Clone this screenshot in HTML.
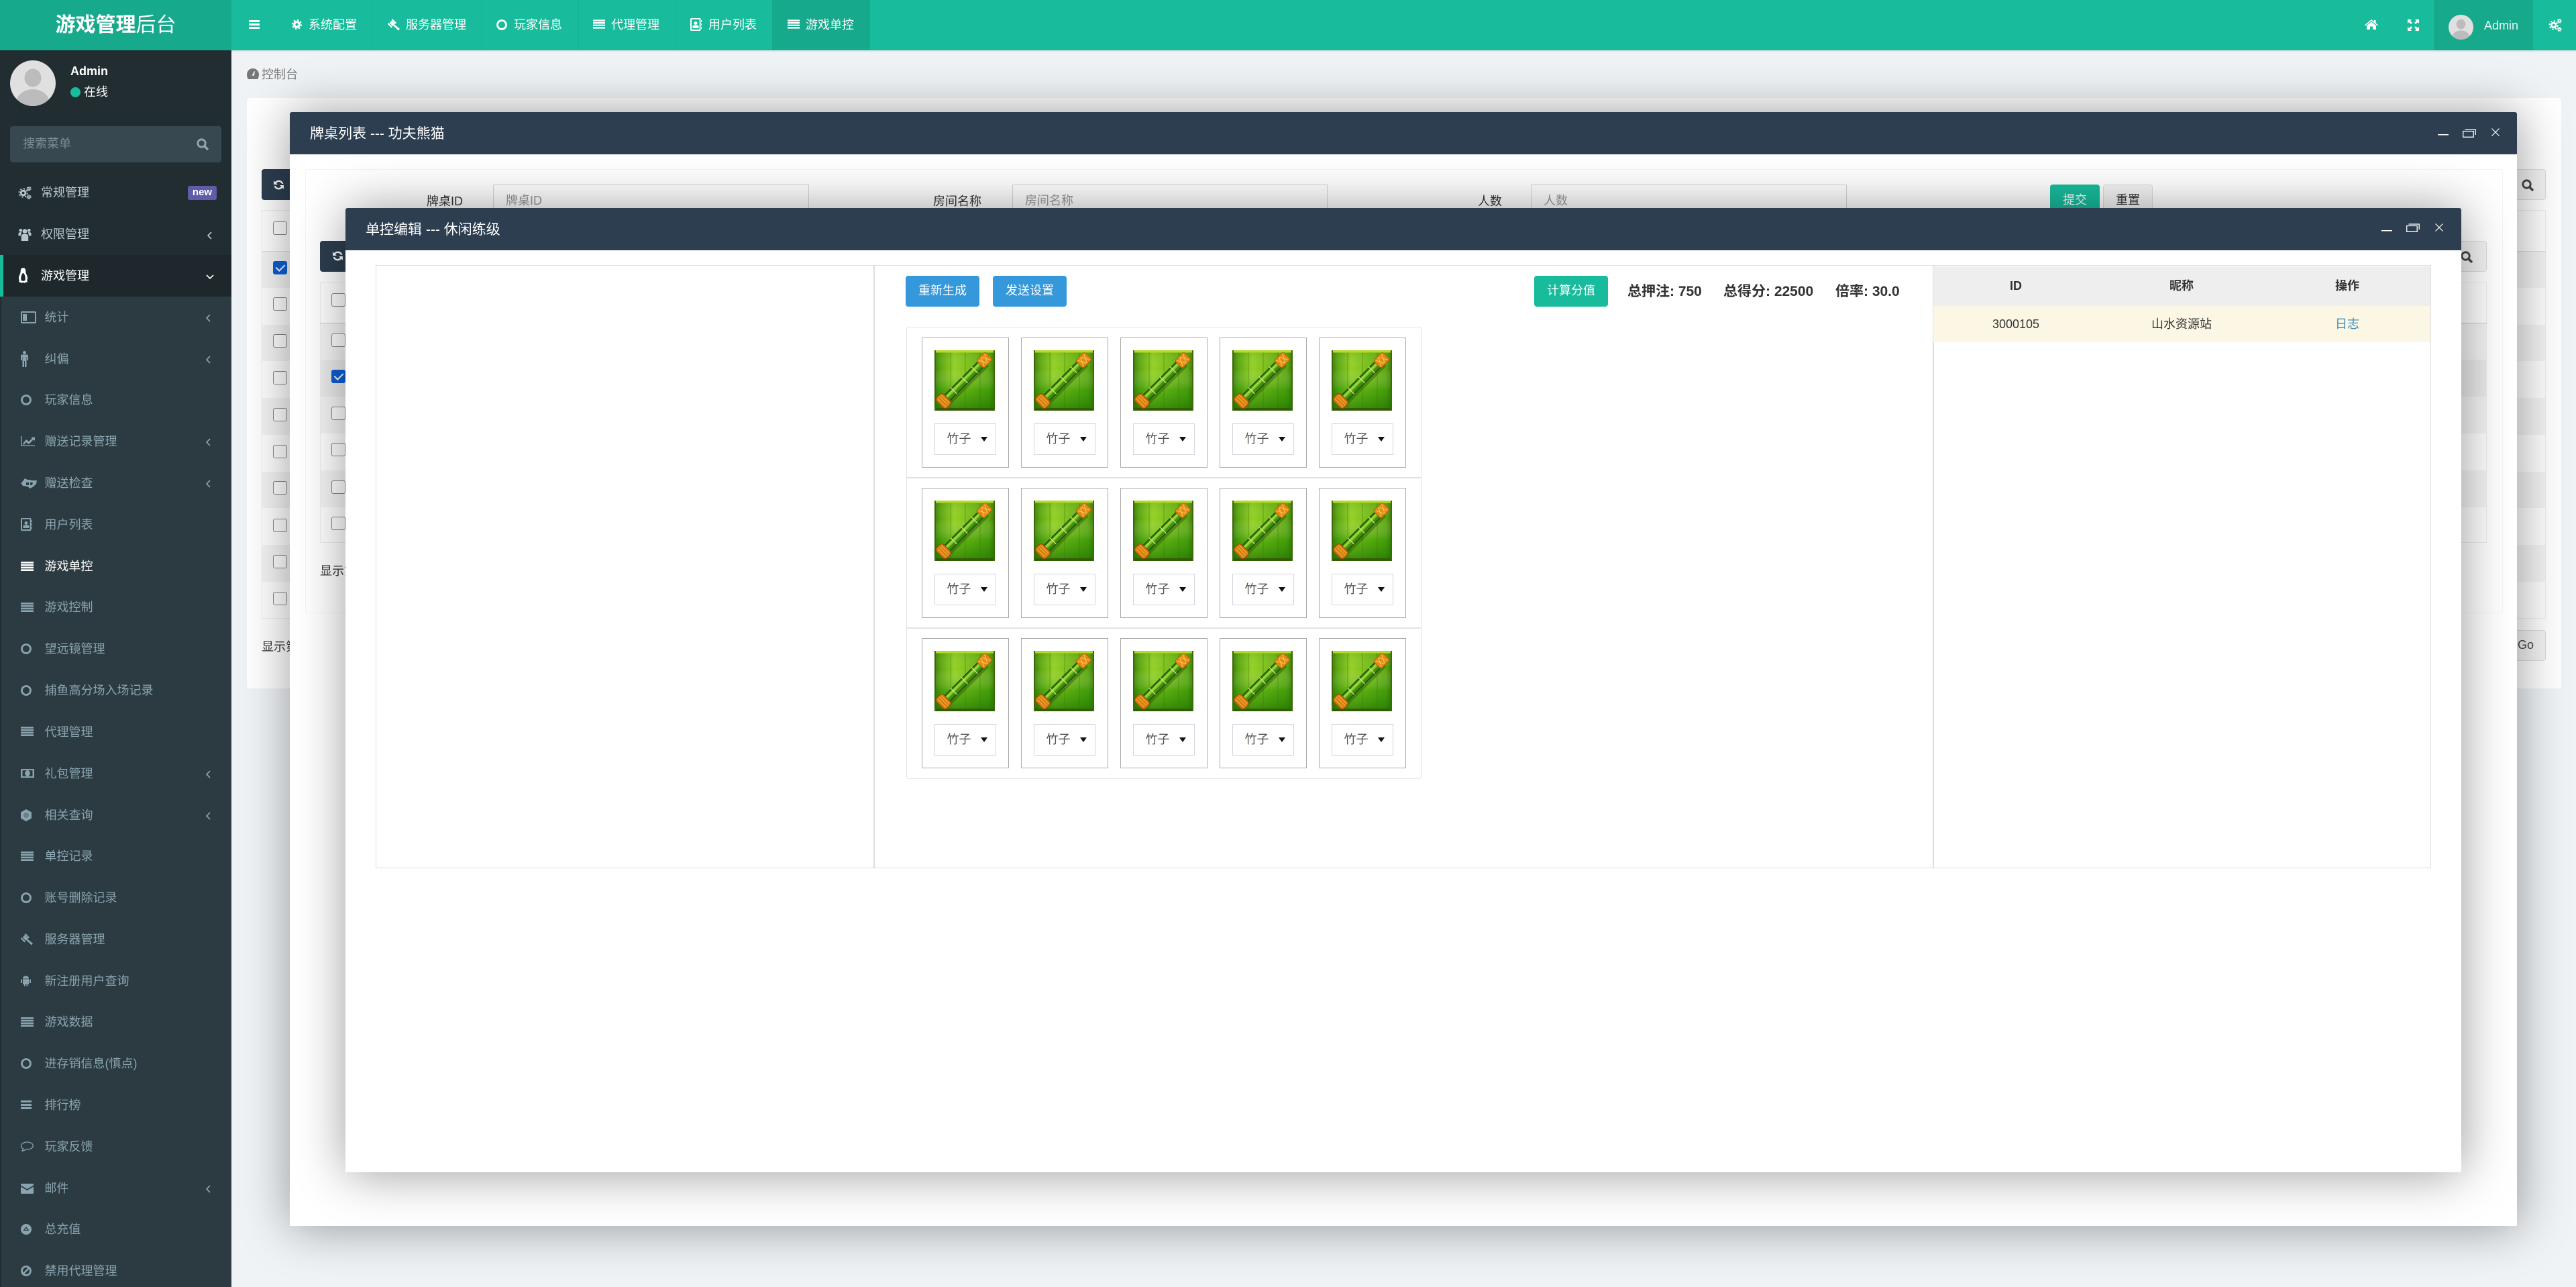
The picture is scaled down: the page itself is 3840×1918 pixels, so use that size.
<!DOCTYPE html>
<html lang="zh"><head><meta charset="utf-8"><title>游戏管理后台</title>
<style>
*{box-sizing:border-box}
html,body{margin:0;padding:0;width:3840px;height:1918px;overflow:hidden;background:#eff3f6;font-family:"Liberation Sans","WenQuanYi Zen Hei","Noto Sans CJK SC",sans-serif;font-size:18px;color:#333}
.a{position:absolute}
svg.i{position:absolute;fill:currentColor;overflow:visible}
#top{left:0;top:0;width:3840px;height:75px;background:#18bc9c;box-shadow:0 1px 3px rgba(0,0,0,.12);z-index:5}
#logo{left:0;top:0;width:345px;height:75px;background:#17a98c;color:#fff;font-size:30px;line-height:75px;text-align:center}
#logo b{font-weight:bold}
.tn{position:absolute;top:0;height:75px;line-height:74px;color:#fff;white-space:nowrap}
.dv{position:absolute;top:0;width:1px;height:75px;background:#17b294}
#side{left:0;top:75px;width:345px;height:1843px;background:#222d32;z-index:4;overflow:hidden}
#sub{position:absolute;left:0;top:367px;width:345px;height:1476px;background:#2c3b41;border-left:2px solid #222d32}
.r{position:absolute;left:0;width:345px;height:62px;line-height:63px;color:#8aa4af;white-space:nowrap}
.r span{position:absolute;left:66.5px;top:0}
.r svg.i{left:31px}
.r.t{color:#b8c7ce}
.r.t span{left:61px}
.r.t svg.i{left:27px}
.r svg.i.ar{left:307px;top:26px;width:7px;height:12px;fill:none;stroke:currentColor;stroke-width:1.6}
.r.t svg.i.ar{left:309px}
.panel{background:#fff;border-radius:4px}
.cb{position:absolute;width:21px;height:20px;border:1.5px solid #888;border-radius:3px;background:#fff}
.cb.on{background:#0d5fd6;border-color:#0d5fd6}
.cb.on:after{content:"";position:absolute;left:6px;top:1px;width:6px;height:11px;border:solid #fff;border-width:0 2.5px 2.5px 0;transform:rotate(45deg)}
.mod{position:absolute;background:#fff;box-shadow:1.5px 1.5px 75px rgba(0,0,0,.4);border-radius:3px 3px 0 0}
.mh{position:absolute;left:0;top:0;right:0;height:63px;background:#2c3e50;color:#fff;font-size:21px;line-height:65px;border-radius:3px 3px 0 0;padding-left:30px}
.ln{position:absolute;background:#eee;height:1px}
.sh{position:absolute;background:rgba(0,0,0,.04)}
.btn2{position:absolute;background:#f4f4f4;border:1.5px solid #ddd;border-radius:4px;color:#444}
.rf{position:absolute;background:#2c3e50;border-radius:4px;color:#fff}
.inp{position:absolute;height:47px;border:1.5px solid #d2d6de;background:#fff;color:#999;line-height:47px;padding-left:18px}
.cell{position:absolute;width:130px;height:194px;border:1.5px solid #aaa;background:#fff}
.cell svg{position:absolute;left:17.5px;top:17.5px;width:90px;height:90px}
.sel{position:absolute;left:17.5px;top:126.5px;width:92px;height:47px;border:1.5px solid #d2d6de;color:#555;line-height:45px;padding-left:18px}
.sel:after{content:"";position:absolute;left:68px;top:19px;border:5.5px solid transparent;border-top:7px solid #111;border-bottom:0}
.b{position:absolute;top:411px;height:46px;border-radius:4px;color:#fff;line-height:45px;text-align:center;background:#3498db}
</style></head><body>
<svg width="0" height="0" style="position:absolute">
<defs>
<linearGradient id="bg" x1="0" x2="1" y1="0" y2="0"><stop offset="0" stop-color="#3c7a06"/><stop offset=".1" stop-color="#5ca610"/><stop offset=".33" stop-color="#93d024"/><stop offset=".62" stop-color="#76bc18"/><stop offset=".9" stop-color="#5ba610"/><stop offset="1" stop-color="#3a7606"/></linearGradient>
<linearGradient id="bv" x1="0" x2="0" y1="0" y2="1"><stop offset="0" stop-color="#2a7a00" stop-opacity=".18"/><stop offset=".3" stop-color="#fff" stop-opacity="0"/><stop offset=".65" stop-color="#1c8a00" stop-opacity=".35"/><stop offset="1" stop-color="#146c00" stop-opacity=".7"/></linearGradient>
<symbol id="bam" viewBox="0 0 90 90">
<rect width="90" height="90" fill="url(#bg)"/><rect width="90" height="90" fill="url(#bv)"/>
<path d="M24 3V86M46 3V86M68 3V86" stroke="#3a7207" stroke-width=".8" opacity=".6" fill="none"/>
<rect width="90" height="3.500" fill="#b4da28"/><rect y="86" width="90" height="4" fill="#345c05"/>
<path d="M0 0h2v90H0zM88 0h2v90h-2z" fill="#3c6a08"/>
<path d="M20 78L78 20" stroke="#2a5206" stroke-width="10" opacity=".45" fill="none"/>
<path d="M15 75L73 17" stroke="#225607" stroke-width="13" fill="none"/>
<path d="M15 75L73 17" stroke="#3f8f0e" stroke-width="9.500" fill="none"/>
<path d="M14 74L72 16" stroke="#7cc226" stroke-width="4.500" fill="none"/>
<path d="M13.500 73.500L71.500 15.500" stroke="#b2e04a" stroke-width="1.400" fill="none"/>
<path d="M24 55.500L33.500 65M40 39.500L49.500 49M55 24.500L64.500 34" stroke="#cbe86e" stroke-width="1.300" fill="none"/>
<g transform="rotate(-45 13 76)"><rect x="6" y="65" width="15" height="22" rx="5" fill="#d67a0e" stroke="#8c4c05" stroke-width="1"/><path d="M10 67.500V84.500M14 67V85M17.500 67.500V84.500" stroke="#f4b63e" stroke-width="1.100" fill="none"/></g>
<g transform="rotate(-45 74 15)"><rect x="65" y="7" width="19" height="16" rx="3" fill="#e48a12" stroke="#a05c08" stroke-width=".8"/><path d="M68 9L74 21M74 9L68 21M75 9L81 21M81 9L75 21" stroke="#f7cc66" stroke-width="1" fill="none"/></g>
</symbol>
<symbol id="bars" viewBox="0 0 16 13"><path d="M0 0h16v3H0zM0 5h16v3H0zM0 10h16v3H0z"/></symbol>
<symbol id="list" viewBox="0 0 19 14"><path d="M0 0h19v2.600H0zM0 3.800h19v2.600H0zM0 7.600h19v2.600H0zM0 11.400h19v2.600H0z"/></symbol>
<symbol id="co" viewBox="0 0 16 16"><circle cx="8" cy="8" r="6.500" fill="none" stroke="currentColor" stroke-width="2.800"/></symbol>
<symbol id="cogs" viewBox="0 0 20 20"><circle cx="7.500" cy="10" r="3.500" fill="none" stroke="currentColor" stroke-width="3"/><circle cx="7.500" cy="10" r="6.500" fill="none" stroke="currentColor" stroke-width="2" stroke-dasharray="2.500 2.600"/><circle cx="16.500" cy="3.500" r="1.800" fill="none" stroke="currentColor" stroke-width="1.600"/><circle cx="16.500" cy="3.500" r="3.200" fill="none" stroke="currentColor" stroke-width="1.200" stroke-dasharray="1.500 1.300"/><circle cx="16.500" cy="16.500" r="1.800" fill="none" stroke="currentColor" stroke-width="1.600"/><circle cx="16.500" cy="16.500" r="3.200" fill="none" stroke="currentColor" stroke-width="1.200" stroke-dasharray="1.500 1.300"/></symbol>
<symbol id="cog" viewBox="0 0 16 18"><circle cx="8" cy="9" r="4" fill="none" stroke="currentColor" stroke-width="3.400"/><circle cx="8" cy="9" r="7" fill="none" stroke="currentColor" stroke-width="2" stroke-dasharray="2.800 2.700"/></symbol>
<symbol id="gavel" viewBox="0 0 18 18"><path d="M7 0l6 6-1.500 1.500-6-6zM1 6l6 6-1.500 1.500-6-6zM6 2.500l5 5-3.500 3.500-5-5zM10 8.500l8 6.500-2 2.500-7.500-7z"/></symbol>
<symbol id="book" viewBox="0 0 17 19"><path d="M2 0h12a1.500 1.500 0 0 1 1.500 1.500v16A1.500 1.500 0 0 1 14 19H2a2 2 0 0 1-2-2V2a2 2 0 0 1 2-2zm0 1.800V17h11.700V1.800z" fill-rule="evenodd"/><circle cx="8" cy="7.500" r="2.500"/><path d="M3.500 15v-2.500q0-2 2-2h5q2 0 2 2V15zM16 3h1v3h-1zM16 8h1v3h-1zM16 13h1v3h-1z"/></symbol>
<symbol id="users" viewBox="0 0 20 22"><circle cx="10" cy="6" r="3.600"/><circle cx="3.500" cy="4.500" r="2.500"/><circle cx="16.500" cy="4.500" r="2.500"/><path d="M4.500 21v-7q0-3.500 3-3.500h5q3 0 3 3.500v7zM0 13v-3q0-2.500 3-2.500h2L3.500 13zM20 13v-3q0-2.500-3-2.500h-2l1.500 5.500z"/></symbol>
<symbol id="linux" viewBox="0 0 16 24"><path d="M8 0q4 0 4 5 0 3 2 7t0 8l1 2-5 2-2-1-2 1-5-2 1-2q-2-4 0-8t2-7q0-5 4-5zm0 8q-2 1-3 5t0 7l3 1 3-1q1-3 0-7t-3-5z" fill-rule="evenodd"/></symbol>
<symbol id="batt" viewBox="0 0 24 18"><path d="M2 0h19a2 2 0 0 1 2 2v14a2 2 0 0 1-2 2H2a2 2 0 0 1-2-2V2a2 2 0 0 1 2-2zm0 2v14h19V2z" fill-rule="evenodd"/><path d="M3 4h6v10H3z"/></symbol>
<symbol id="male" viewBox="0 0 11 24"><circle cx="5.500" cy="2.500" r="2.500"/><path d="M2 5.500h7q2 0 2 2V14H9v-5H8.500v15H6v-9H5v9H2.500V9H2v5H0V7.500q0-2 2-2z"/></symbol>
<symbol id="chart" viewBox="0 0 21 15"><path d="M0 0h1.400v13.600H21V15H0zM3 11l5-6 4 3 5-5-2-1.500h6v5.500l-2-2-7 7-4-3-3.500 4z"/></symbol>
<symbol id="hand" viewBox="0 0 24 16"><path d="M0 9L6 1l4 2 3 0 4 1 7 0-1 5-4 4-5 3-4-3-7-1-2-3zM8 7h4v4H8zM14 7l4 0-1 4-3 0z" fill-rule="evenodd"/></symbol>
<symbol id="money" viewBox="0 0 20 13"><path d="M0 0h20v13H0zM2.500 2v9h15V2z" fill-rule="evenodd"/><ellipse cx="10" cy="6.500" rx="3.800" ry="4.500"/></symbol>
<symbol id="hex" viewBox="0 0 16 18"><path d="M8 0l8 4.500v9L8 18 0 13.500v-9z"/><circle cx="8" cy="9" r="4" fill="#2c3b41" opacity=".35"/></symbol>
<symbol id="droid" viewBox="0 0 15 17"><path d="M3 5.500q0-4 4.500-4t4.500 4zM3 6.200h9V14H10v3H8.500v-3h-2v3H5v-3H3zM0 6.500h2V12H0zM13 6.500h2V12h-2z"/></symbol>
<symbol id="cmt" viewBox="0 0 19 16"><path d="M9.500 1C14.500 1 18.300 3.500 18.300 6.500S14.500 12 9.500 12q-1 0-2 0Q5 14 1.500 14.500 3.500 13 3.500 11 .7 9.500.7 6.500C.7 3.500 4.500 1 9.500 1z" fill="none" stroke="currentColor" stroke-width="1.300"/></symbol>
<symbol id="mail" viewBox="0 0 19 15"><path d="M1 0h17a1 1 0 0 1 1 1v1.500L9.500 8 0 2.500V1a1 1 0 0 1 1-1zM0 4.500l9.500 5.500L19 4.500V14a1 1 0 0 1-1 1H1a1 1 0 0 1-1-1z"/></symbol>
<symbol id="cup" viewBox="0 0 16 16"><path d="M8 0a8 8 0 1 1 0 16A8 8 0 0 1 8 0zm0 4L3.500 10h9z M8 6.500L10 9H6z" fill-rule="evenodd"/></symbol>
<symbol id="ban" viewBox="0 0 16 16"><circle cx="8" cy="8" r="6.500" fill="none" stroke="currentColor" stroke-width="2.800"/><path d="M3.500 12.500l9-9" stroke="currentColor" stroke-width="2.500"/></symbol>
<symbol id="dash" viewBox="0 0 18 16"><path d="M9 0a9 9 0 0 1 9 9q0 4-2 7H2Q0 13 0 9a9 9 0 0 1 9-9zM8 9.500a1.500 1.500 0 1 0 3 0l1-5-1-.5z" fill-rule="evenodd"/></symbol>
<symbol id="ref" viewBox="0 0 16 16"><path d="M14.500 6.500C13.800 3.500 11.200 1.500 8 1.500 5.900 1.500 4 2.500 2.900 4L1 2v5.500h5.500L4.600 5.600C5.400 4.500 6.600 3.800 8 3.800c2 0 3.700 1.100 4.200 2.700zM1.500 9.500C2.200 12.500 4.800 14.500 8 14.500c2.100 0 4-1 5.100-2.500L15 14V8.500H9.500l1.900 1.900C10.600 11.500 9.400 12.200 8 12.200c-2 0-3.700-1.100-4.200-2.700z"/></symbol>
<symbol id="srch" viewBox="0 0 18 18"><circle cx="7.500" cy="7.500" r="5.700" fill="none" stroke="currentColor" stroke-width="2.800"/><path d="M11.500 11.500l5.500 5.500" stroke="currentColor" stroke-width="3.400"/></symbol>
<symbol id="home" viewBox="0 0 20 15"><path d="M10 0l4 3.300V1h2.500v4.400L20 8.300l-1 1.100-9-7.400-9 7.400-1-1.100zM10 3.400l7 5.800V15h-5v-4.500H8V15H3V9.200z"/></symbol>
<symbol id="expd" viewBox="0 0 17 17"><path d="M0 0h6L4 2l3 3-2 2-3-3-2 2zM17 0v6l-2-2-3 3-2-2 3-3-2-2zM0 17v-6l2 2 3-3 2 2-3 3 2 2zM17 17h-6l2-2-3-3 2-2 3 3 2-2z"/></symbol>
<symbol id="ava" viewBox="0 0 68 68"><circle cx="34" cy="34" r="34" fill="#e0e0e0"/><ellipse cx="34" cy="26" rx="12.500" ry="13.500" fill="#bcbcbc"/><clipPath id="ac"><circle cx="34" cy="34" r="34"/></clipPath><ellipse cx="34" cy="64" rx="25" ry="21" fill="#bcbcbc" clip-path="url(#ac)"/></symbol>
</defs></svg>

<!-- Content -->
<svg class="i" style="left:368px;top:102px;width:18px;height:16px;color:#777"><use href="#dash"/></svg>
<div class="a" style="left:390px;top:99px;line-height:24px;color:#777">控制台</div>

<div class="a panel" style="left:368px;top:146px;width:3450px;height:880px"></div>
<div class="rf" style="left:390px;top:252px;width:60px;height:46px"><svg class="i" style="left:17px;top:15px;width:17px;height:17px"><use href="#ref"/></svg></div>
<div class="btn2" style="left:3740px;top:252px;width:55px;height:46px"><svg class="i" style="left:18px;top:14px;width:18px;height:18px"><use href="#srch"/></svg></div>
<div class="a" style="left:390px;top:313px;width:3405px;height:609px;border:1.5px solid #eee;background:#fff"></div>
<div class="ln" style="left:390px;top:374px;width:3405px;background:#ddd"></div>
<div class="sh" style="left:391px;top:375px;width:3403px;height:54px"></div>
<div class="sh" style="left:391px;top:484px;width:3403px;height:54px"></div>
<div class="sh" style="left:391px;top:593px;width:3403px;height:55px"></div>
<div class="sh" style="left:391px;top:703px;width:3403px;height:54px"></div>
<div class="sh" style="left:391px;top:812px;width:3403px;height:55px"></div>
<div class="cb" style="left:407px;top:330px"></div>
<div class="cb on" style="left:407px;top:389px"></div>
<div class="cb" style="left:407px;top:443px"></div>
<div class="cb" style="left:407px;top:498px"></div>
<div class="cb" style="left:407px;top:553px"></div>
<div class="cb" style="left:407px;top:608px"></div>
<div class="cb" style="left:407px;top:663px"></div>
<div class="cb" style="left:407px;top:717px"></div>
<div class="cb" style="left:407px;top:773px"></div>
<div class="cb" style="left:407px;top:827px"></div>
<div class="cb" style="left:407px;top:882px"></div>
<div class="a" style="left:390px;top:952px;line-height:24px;white-space:nowrap">显示第 1 到第 10 条记录</div>
<div class="btn2" style="left:3730px;top:939px;width:65px;height:46px;line-height:43px;padding-left:22px">Go</div>

<!-- Modal 1 -->
<div class="mod" style="left:432px;top:167px;width:3320px;height:1660px">
  <div class="mh">牌桌列表 --- 功夫熊猫</div>
  <div class="a" style="left:23px;top:85px;width:3276px;height:662px;border:1.5px solid #f4f4f4;border-radius:4px;background:#fff"></div>
  <div class="a" style="left:204px;top:121px;width:50px;line-height:24px;text-align:right;white-space:nowrap">牌桌ID</div>
  <div class="inp" style="left:303px;top:108px;width:471px">牌桌ID</div>
  <div class="a" style="left:959px;top:121px;line-height:24px;white-space:nowrap">房间名称</div>
  <div class="inp" style="left:1077px;top:108px;width:470px">房间名称</div>
  <div class="a" style="left:1771px;top:121px;line-height:24px">人数</div>
  <div class="inp" style="left:1850px;top:108px;width:471px">人数</div>
  <div class="a" style="left:2624px;top:108px;width:74px;height:47px;background:#18bc9c;color:#fff;text-align:center;line-height:47px;border-radius:4px">提交</div>
  <div class="btn2" style="left:2703px;top:108px;width:74px;height:47px;text-align:center;line-height:44px;color:#333">重置</div>
  <div class="rf" style="left:45px;top:192px;width:60px;height:46px"><svg class="i" style="left:18px;top:14px;width:17px;height:17px"><use href="#ref"/></svg></div>
  <div class="btn2" style="left:3223px;top:192px;width:52px;height:46px"><svg class="i" style="left:12px;top:14px;width:18px;height:18px"><use href="#srch"/></svg></div>
  <div class="a" style="left:45px;top:253px;width:3230px;height:389px;border:1.5px solid #eee;background:#fff"></div>
  <div class="ln" style="left:45px;top:314px;width:3230px;background:#ccc"></div>
  <div class="sh" style="left:46px;top:315px;width:3228px;height:54px"></div>
  <div class="sh" style="left:46px;top:369px;width:3228px;height:55px;background:rgba(0,0,0,.075)"></div>
  <div class="sh" style="left:46px;top:424px;width:3228px;height:55px"></div>
  <div class="sh" style="left:46px;top:534px;width:3228px;height:55px"></div>
  <div class="cb" style="left:62px;top:270px"></div>
  <div class="cb" style="left:62px;top:330px"></div>
  <div class="cb on" style="left:62px;top:384px"></div>
  <div class="cb" style="left:62px;top:439px"></div>
  <div class="cb" style="left:62px;top:493px"></div>
  <div class="cb" style="left:62px;top:549px"></div>
  <div class="cb" style="left:62px;top:603px"></div>
  <div class="a" style="left:45px;top:672px;line-height:24px;white-space:nowrap">显示第 1 到第 6 条记录</div>
  <svg class="i" style="left:3202px;top:33px;width:16px;height:2px;color:#fff"><path d="M0 0h16v1.500H0z"/></svg>
  <svg class="i" style="left:3239px;top:25px;width:20px;height:13px;color:#fff;fill:none;stroke:#fff;stroke-width:1.300"><path d="M.7 3.500h15.500v8.800H.7zM3.500 1h15.700v8"/></svg>
  <svg class="i" style="left:3282px;top:24px;width:12px;height:12px;fill:none;stroke:#fff;stroke-width:1.200"><path d="M.5.500l11 11M11.500.500l-11 11"/></svg>
</div>

<!-- Modal 2 -->
<div class="mod" style="left:515px;top:310px;width:3154px;height:1437px">
  <div class="mh">单控编辑 --- 休闲练级</div>
  <div class="a" style="left:45px;top:85px;width:3064px;height:899px;border:1.5px solid #ddd"></div>
  <div class="a" style="left:787px;top:85px;width:1.5px;height:899px;background:#ddd"></div>
  <div class="a" style="left:2366px;top:85px;width:1.5px;height:899px;background:#ddd"></div>
  <div class="a" style="left:2366.500px;top:86.500px;width:741px;height:60px;background:#eee"></div>
  <div class="a" style="left:2366.500px;top:146px;width:741px;height:54px;background:#fcf7e4"></div>
  <div class="a" style="left:2440px;top:104px;width:100px;text-align:center;line-height:24px;font-weight:bold;margin-left:0">ID</div>
  <div class="a" style="left:2687px;top:104px;width:100px;text-align:center;line-height:24px;font-weight:bold">昵称</div>
  <div class="a" style="left:2934px;top:104px;width:100px;text-align:center;line-height:24px;font-weight:bold">操作</div>
  <div class="a" style="left:2440px;top:161px;width:100px;text-align:center;line-height:24px">3000105</div>
  <div class="a" style="left:2687px;top:161px;width:100px;text-align:center;line-height:24px">山水资源站</div>
  <div class="a" style="left:2934px;top:161px;width:100px;text-align:center;line-height:24px;color:#3c8dbc">日志</div>
  <div class="a" style="left:1911px;top:113px;line-height:24px;font-size:21px;font-weight:bold;white-space:nowrap">总押注: 750</div>
  <div class="a" style="left:2054px;top:113px;line-height:24px;font-size:21px;font-weight:bold;white-space:nowrap">总得分: 22500</div>
  <div class="a" style="left:2221px;top:113px;line-height:24px;font-size:21px;font-weight:bold;white-space:nowrap">倍率: 30.0</div>
  <svg class="i" style="left:3035px;top:33px;width:16px;height:2px"><path d="M0 0h16v1.500H0z" fill="#fff"/></svg>
  <svg class="i" style="left:3072px;top:23px;width:20px;height:13px;fill:none;stroke:#fff;stroke-width:1.300"><path d="M.7 3.500h15.500v8.800H.7zM3.500 1h15.700v8"/></svg>
  <svg class="i" style="left:3115px;top:23px;width:12px;height:12px;fill:none;stroke:#fff;stroke-width:1.200"><path d="M.5.500l11 11M11.500.500l-11 11"/></svg>
  <div class="a" style="left:836px;top:177px;width:768px;height:674px;border:1.5px solid #e2e2e2;border-radius:4px"></div>
  <div class="a" style="left:836px;top:401px;width:768px;height:1.5px;background:#e2e2e2"></div>
  <div class="a" style="left:836px;top:625px;width:768px;height:1.5px;background:#e2e2e2"></div>
</div>
<div class="b" style="left:1350px;top:411px;width:110px;z-index:3">重新生成</div>
<div class="b" style="left:1480px;top:411px;width:110px;z-index:3">发送设置</div>
<div class="b" style="left:2287px;top:411px;width:110px;background:#18bc9c;z-index:3">计算分值</div>

<div class="cell" style="left:1374px;top:503px"><svg><use href="#bam"/></svg><div class="sel">竹子</div></div>
<div class="cell" style="left:1522px;top:503px"><svg><use href="#bam"/></svg><div class="sel">竹子</div></div>
<div class="cell" style="left:1670px;top:503px"><svg><use href="#bam"/></svg><div class="sel">竹子</div></div>
<div class="cell" style="left:1818px;top:503px"><svg><use href="#bam"/></svg><div class="sel">竹子</div></div>
<div class="cell" style="left:1966px;top:503px"><svg><use href="#bam"/></svg><div class="sel">竹子</div></div>
<div class="cell" style="left:1374px;top:727px"><svg><use href="#bam"/></svg><div class="sel">竹子</div></div>
<div class="cell" style="left:1522px;top:727px"><svg><use href="#bam"/></svg><div class="sel">竹子</div></div>
<div class="cell" style="left:1670px;top:727px"><svg><use href="#bam"/></svg><div class="sel">竹子</div></div>
<div class="cell" style="left:1818px;top:727px"><svg><use href="#bam"/></svg><div class="sel">竹子</div></div>
<div class="cell" style="left:1966px;top:727px"><svg><use href="#bam"/></svg><div class="sel">竹子</div></div>
<div class="cell" style="left:1374px;top:951px"><svg><use href="#bam"/></svg><div class="sel">竹子</div></div>
<div class="cell" style="left:1522px;top:951px"><svg><use href="#bam"/></svg><div class="sel">竹子</div></div>
<div class="cell" style="left:1670px;top:951px"><svg><use href="#bam"/></svg><div class="sel">竹子</div></div>
<div class="cell" style="left:1818px;top:951px"><svg><use href="#bam"/></svg><div class="sel">竹子</div></div>
<div class="cell" style="left:1966px;top:951px"><svg><use href="#bam"/></svg><div class="sel">竹子</div></div>

<!-- Top bar -->
<div class="a" id="top">
  <div class="a" id="logo"><b>游戏管理</b>后台</div>
  <svg class="i" style="left:371px;top:30px;width:16px;height:13px;color:#fff"><use href="#bars"/></svg>
  <div class="dv" style="left:554px"></div><div class="dv" style="left:718px"></div><div class="dv" style="left:862px"></div><div class="dv" style="left:1007px"></div><div class="dv" style="left:1151px"></div>
  <div class="a" style="left:1151px;top:0;width:146px;height:74px;background:#17a98c"></div>
  <svg class="i" style="left:435px;top:28px;width:15px;height:17px;color:#fff"><use href="#cog"/></svg><div class="tn" style="left:460px">系统配置</div>
  <svg class="i" style="left:578px;top:28px;width:18px;height:18px;color:#fff"><use href="#gavel"/></svg><div class="tn" style="left:605px">服务器管理</div>
  <svg class="i" style="left:740px;top:29px;width:16px;height:16px;color:#fff"><use href="#co"/></svg><div class="tn" style="left:766px">玩家信息</div>
  <svg class="i" style="left:884px;top:29px;width:18px;height:14px;color:#fff"><use href="#list"/></svg><div class="tn" style="left:911px">代理管理</div>
  <svg class="i" style="left:1029px;top:27px;width:17px;height:19px;color:#fff"><use href="#book"/></svg><div class="tn" style="left:1056px">用户列表</div>
  <svg class="i" style="left:1174px;top:29px;width:18px;height:14px;color:#fff"><use href="#list"/></svg><div class="tn" style="left:1201px">游戏单控</div>
  <svg class="i" style="left:3525px;top:29px;width:20px;height:15px;color:#fff"><use href="#home"/></svg>
  <svg class="i" style="left:3589px;top:29px;width:17px;height:17px;color:#fff"><use href="#expd"/></svg>
  <div class="a" style="left:3628px;top:0;width:148px;height:75px;background:#17a98c"></div>
  <svg class="i" style="left:3650px;top:22px;width:37px;height:37px"><use href="#ava"/></svg>
  <div class="tn" style="left:3703px;line-height:76px;color:#e8f8f5">Admin</div>
  <svg class="i" style="left:3799px;top:28px;width:20px;height:19px;color:#fff"><use href="#cogs"/></svg>
</div>

<!-- Sidebar -->
<div class="a" id="side">
  <svg class="i" style="left:15px;top:15px;width:68px;height:68px"><use href="#ava"/></svg>
  <div class="a" style="left:105px;top:19px;line-height:24px;color:#fff;font-weight:bold;font-size:18px">Admin</div>
  <div class="a" style="left:105px;top:55px;width:15px;height:15px;border-radius:50%;background:#18bc9c"></div>
  <div class="a" style="left:125px;top:50px;line-height:24px;color:#fff">在线</div>
  <div class="a" style="left:15px;top:113px;width:315px;height:54px;background:#374850;border-radius:4px;color:#7f8e94;line-height:53px;padding-left:19px">搜索菜单<svg class="i" style="left:278px;top:18px;width:18px;height:18px;color:#9aa6ab"><use href="#srch"/></svg></div>

  <div id="sub"></div>
  <div class="a" style="left:0;top:305px;width:345px;height:62px;background:#1e282c;border-left:5px solid #18bc9c"></div>

  <div class="r t" style="top:181px"><svg class="i" style="top:22px;width:20px;height:19px"><use href="#cogs"/></svg><span>常规管理</span><div class="a" style="left:280px;top:21px;width:43px;height:21px;background:#605ca8;border-radius:3px;color:#fff;font-size:15px;font-weight:bold;line-height:19px;text-align:center">new</div></div>
  <div class="r t" style="top:243px"><svg class="i" style="top:21px;width:20px;height:21px"><use href="#users"/></svg><span>权限管理</span><svg class="i ar" viewBox="0 0 7 12" style="top:27px"><path d="M6 1L1 6l5 5"/></svg></div>
  <div class="r t" style="top:305px;color:#fff"><svg class="i" style="top:19px;left:27px;width:15px;height:23px"><use href="#linux"/></svg><span>游戏管理</span><svg class="i ar" viewBox="0 0 12 7" style="left:307px;top:29px;width:12px;height:7px"><path d="M1 1l5 5 5-5"/></svg></div>

  <div class="r" style="top:367px"><svg class="i" style="top:22px;width:24px;height:18px"><use href="#batt"/></svg><span>统计</span><svg class="i ar" viewBox="0 0 7 12"><path d="M6 1L1 6l5 5"/></svg></div>
  <div class="r" style="top:429px"><svg class="i" style="top:19px;left:31px;width:11px;height:24px"><use href="#male"/></svg><span>纠偏</span><svg class="i ar" viewBox="0 0 7 12"><path d="M6 1L1 6l5 5"/></svg></div>
  <div class="r" style="top:490px"><svg class="i" style="top:23px;width:16px;height:16px"><use href="#co"/></svg><span>玩家信息</span></div>
  <div class="r" style="top:552px"><svg class="i" style="top:23px;width:21px;height:15px"><use href="#chart"/></svg><span>赠送记录管理</span><svg class="i ar" viewBox="0 0 7 12"><path d="M6 1L1 6l5 5"/></svg></div>
  <div class="r" style="top:614px"><svg class="i" style="top:23px;width:24px;height:16px"><use href="#hand"/></svg><span>赠送检查</span><svg class="i ar" viewBox="0 0 7 12"><path d="M6 1L1 6l5 5"/></svg></div>
  <div class="r" style="top:676px"><svg class="i" style="top:21px;width:17px;height:19px"><use href="#book"/></svg><span>用户列表</span></div>
  <div class="r" style="top:738px;color:#fff"><svg class="i" style="top:24px;width:19px;height:14px"><use href="#list"/></svg><span>游戏单控</span></div>
  <div class="r" style="top:799px"><svg class="i" style="top:24px;width:19px;height:14px"><use href="#list"/></svg><span>游戏控制</span></div>
  <div class="r" style="top:861px"><svg class="i" style="top:23px;width:16px;height:16px"><use href="#co"/></svg><span>望远镜管理</span></div>
  <div class="r" style="top:923px"><svg class="i" style="top:23px;width:16px;height:16px"><use href="#co"/></svg><span>捕鱼高分场入场记录</span></div>
  <div class="r" style="top:985px"><svg class="i" style="top:23px;width:19px;height:14px"><use href="#list"/></svg><span>代理管理</span></div>
  <div class="r" style="top:1047px"><svg class="i" style="top:24px;width:20px;height:13px"><use href="#money"/></svg><span>礼包管理</span><svg class="i ar" viewBox="0 0 7 12"><path d="M6 1L1 6l5 5"/></svg></div>
  <div class="r" style="top:1109px"><svg class="i" style="top:22px;width:16px;height:18px"><use href="#hex"/></svg><span>相关查询</span><svg class="i ar" viewBox="0 0 7 12"><path d="M6 1L1 6l5 5"/></svg></div>
  <div class="r" style="top:1170px"><svg class="i" style="top:24px;width:19px;height:14px"><use href="#list"/></svg><span>单控记录</span></div>
  <div class="r" style="top:1232px"><svg class="i" style="top:23px;width:16px;height:16px"><use href="#co"/></svg><span>账号删除记录</span></div>
  <div class="r" style="top:1294px"><svg class="i" style="top:22px;width:18px;height:18px"><use href="#gavel"/></svg><span>服务器管理</span></div>
  <div class="r" style="top:1356px"><svg class="i" style="top:22px;width:15px;height:17px"><use href="#droid"/></svg><span>新注册用户查询</span></div>
  <div class="r" style="top:1417px"><svg class="i" style="top:24px;width:19px;height:14px"><use href="#list"/></svg><span>游戏数据</span></div>
  <div class="r" style="top:1479px"><svg class="i" style="top:23px;width:16px;height:16px"><use href="#co"/></svg><span>进存销信息(慎点)</span></div>
  <div class="r" style="top:1541px"><svg class="i" style="top:24px;width:16px;height:13px"><use href="#bars"/></svg><span>排行榜</span></div>
  <div class="r" style="top:1603px"><svg class="i" style="top:23px;width:19px;height:16px"><use href="#cmt"/></svg><span>玩家反馈</span></div>
  <div class="r" style="top:1665px"><svg class="i" style="top:24px;width:19px;height:15px"><use href="#mail"/></svg><span>邮件</span><svg class="i ar" viewBox="0 0 7 12"><path d="M6 1L1 6l5 5"/></svg></div>
  <div class="r" style="top:1726px"><svg class="i" style="top:23px;width:16px;height:16px"><use href="#cup"/></svg><span>总充值</span></div>
  <div class="r" style="top:1788px"><svg class="i" style="top:23px;width:16px;height:16px"><use href="#ban"/></svg><span>禁用代理管理</span></div>
</div>
</body></html>
